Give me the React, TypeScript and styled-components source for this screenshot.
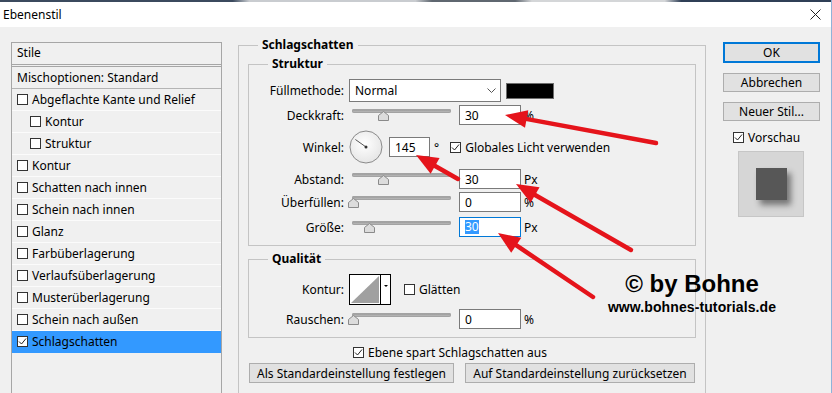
import React from 'react';
import styled, { createGlobalStyle } from 'styled-components';

const Global = createGlobalStyle`
  html, body { margin: 0; padding: 0; background: #f0f0f0; }
  body {
    font-family: "Segoe UI", "Noto Sans", sans-serif;
    font-size: 12px;
    color: #000;
  }
`;

const Window = styled.div`
  position: relative;
  width: 832px;
  height: 393px;
  overflow: hidden;
  box-sizing: border-box;
  background: #f0f0f0;
  border-right: 1px solid #8fb3d9;
  display: flex;
  flex-direction: column;
`;

const DesktopStrip = styled.div`
  flex: none;
  height: 2px;
  background: linear-gradient(90deg, #3b4a5e 0 28%, #c9ccd0 30% 50%, #5f6770 52% 62%, #d4d6d8 64% 80%, #2f3f56 82%);
`;

const TitleBar = styled.div`
  flex: none;
  height: 25px;
  background: #fff;
  display: flex;
  align-items: center;
  justify-content: space-between;
  padding: 0 10px 0 3px;
`;

const Body = styled.div`
  flex: 1;
  display: flex;
  align-items: flex-start;
  padding: 10px 0 0 11px;
`;

/* ---- left style list ---- */

const StyleList = styled.div`
  flex: none;
  width: 211px;
  height: 400px;
  margin-top: 5px;
  box-sizing: border-box;
  border: 1px solid #a6a6a6;
`;

const ListHead = styled.div`
  height: 22px;
  display: flex;
  align-items: center;
  padding: 0 0 3px 5px;
  box-sizing: border-box;
  border-bottom: 1px solid #a6a6a6;
`;

const BlendRow = styled.div`
  height: 21px;
  display: flex;
  align-items: center;
  padding-left: 5px;
  margin-top: 1px;
  border-top: 1px solid #a6a6a6;
  border-bottom: 1px solid #b4b4b4;
`;

const Item = styled.div<{ $nested?: boolean; $selected?: boolean }>`
  height: 21px;
  display: flex;
  align-items: center;
  gap: 4px;
  padding-left: ${p => (p.$nested ? 18 : 5)}px;
  border-bottom: 1px solid ${p => (p.$selected ? '#3399ff' : '#fbfbfb')};
  background: ${p => (p.$selected ? '#3399ff' : 'transparent')};
`;

const Box = styled.span`
  flex: none;
  width: 11px;
  height: 11px;
  box-sizing: border-box;
  border: 1px solid #333;
  background: #fff;
  display: flex;
  align-items: center;
  justify-content: center;
`;

const CheckLine = styled.div<{ $ml?: number; $mt?: number }>`
  display: flex;
  align-items: center;
  gap: 4px;
  height: 16px;
  margin-left: ${p => p.$ml ?? 0}px;
  margin-top: ${p => p.$mt ?? 0}px;
`;

const Check = ({ on }: { on?: boolean }) => (
  <Box>
    {on && (
      <svg width="9" height="9" viewBox="0 0 9 9">
        <polyline points="1,4.5 3.5,7 8,1.5" fill="none" stroke="#222" strokeWidth="1" />
      </svg>
    )}
  </Box>
);

/* ---- main group boxes ---- */

const Main = styled.div`
  flex: none;
  width: 468px;
  margin-left: 16px;
`;

const Group = styled.fieldset<{ $outer?: boolean; $mt?: number }>`
  margin: ${p => p.$mt ?? 0}px 0 0;
  min-width: 0;
  box-sizing: border-box;
  border: 1px solid #c4c4c4;
  padding: ${p => (p.$outer ? '3px 9px 40px' : '7px 0 8px')};
`;

const Legend = styled.legend<{ $ml: number }>`
  margin-left: ${p => p.$ml}px;
  padding: 0 4px;
  font-weight: bold;
  line-height: 16px;
`;

const Row = styled.div<{ $mt?: number }>`
  display: flex;
  align-items: center;
  margin-top: ${p => p.$mt ?? 0}px;
`;

const Label = styled.div`
  flex: none;
  width: 95px;
  margin-right: 5px;
  text-align: right;
`;

const Select = styled.div`
  width: 152px;
  height: 23px;
  box-sizing: border-box;
  border: 1px solid #7a7a7a;
  background: #fff;
  display: flex;
  align-items: center;
  justify-content: space-between;
  padding: 0 4px 0 5px;
`;

const Swatch = styled.div`
  width: 48px;
  height: 16px;
  margin-left: 5px;
  box-sizing: border-box;
  border: 1px solid #6d6d6d;
  background: #000;
`;

const SliderBox = styled.div`
  position: relative;
  flex: none;
  width: 102px;
  height: 20px;
  margin-right: 8px;
`;

const Track = styled.div`
  position: absolute;
  left: 3px;
  right: 0;
  top: 4px;
  height: 4px;
  border-radius: 2px;
  background: linear-gradient(#8e8e8e, #c8c8c8);
  box-shadow: inset 0 0 0 1px #a3a3a3;
`;

const Thumb = styled.svg`
  position: absolute;
  top: 6px;
`;

const Slider = ({ pos }: { pos: number }) => (
  <SliderBox>
    <Track />
    <Thumb width="11" height="10" viewBox="0 0 11 10" style={{ left: pos - 5 }}>
      <polygon points="0.5,9.5 0.5,4.5 5.5,0.5 10.5,4.5 10.5,9.5" fill="#dcdcdc" stroke="#8a8a8a" />
    </Thumb>
  </SliderBox>
);

const NumBox = styled.div<{ $w?: number; $focus?: boolean }>`
  flex: none;
  width: ${p => p.$w ?? 62}px;
  height: 20px;
  box-sizing: border-box;
  border: 1px solid ${p => (p.$focus ? '#0078d7' : '#7a7a7a')};
  background: #fff;
  display: flex;
  align-items: center;
  padding-left: 5px;
`;

const Selected = styled.span`
  background: #3399ff;
  color: #fff;
  line-height: 14px;
`;

const Unit = styled.span<{ $ml?: number }>`
  margin-left: ${p => p.$ml ?? 3}px;
`;

const Contour = styled.svg`
  flex: none;
  margin-right: 13px;
`;

const ButtonRow = styled.div`
  display: flex;
  gap: 11px;
  margin: 3px 1px 0;
`;

const Button = styled.div<{ $w?: number; $h?: number; $primary?: boolean; $mt?: number }>`
  box-sizing: border-box;
  width: ${p => (p.$w ? `${p.$w}px` : 'auto')};
  flex: ${p => (p.$w ? 'none' : '1')};
  height: ${p => p.$h ?? 20}px;
  margin-top: ${p => p.$mt ?? 0}px;
  border: ${p => (p.$primary ? '2px solid #0078d7' : '1px solid #adadad')};
  background: #e1e1e1;
  display: flex;
  align-items: center;
  justify-content: center;
`;

/* ---- right column ---- */

const Side = styled.div`
  flex: none;
  width: 97px;
  margin: 5px 0 0 17px;
  display: flex;
  flex-direction: column;
`;

const Preview = styled.div`
  width: 66px;
  height: 66px;
  margin: 6px 0 0 15px;
  box-sizing: border-box;
  border: 1px solid #c6c6c6;
  background: #d6d6d6;
  display: flex;
  align-items: center;
  justify-content: center;
`;

const PreviewSquare = styled.div`
  width: 31px;
  height: 32px;
  background: #575757;
  box-shadow: 4px 5px 6px rgba(0, 0, 0, 0.45);
`;

/* ---- overlays ---- */

const Arrows = styled.svg`
  position: absolute;
  left: 0;
  top: 0;
  pointer-events: none;
`;

const Watermark = styled.div`
  position: absolute;
  left: 592px;
  top: 270px;
  width: 200px;
  display: flex;
  flex-direction: column;
  align-items: center;
  font-family: "Liberation Sans", Arial, sans-serif;
  font-weight: bold;
  color: #000;
`;

const Big = styled.div`
  font-size: 24px;
  line-height: 28px;
`;

const Small = styled.div`
  font-size: 14px;
  line-height: 18px;
  letter-spacing: 0.1px;
`;

const Arrow = ({ x1, y1, x2, y2 }: { x1: number; y1: number; x2: number; y2: number }) => {
  const len = Math.hypot(x2 - x1, y2 - y1);
  const ux = (x2 - x1) / len;
  const uy = (y2 - y1) / len;
  const L = 22;
  const W = 9;
  const bx = x2 - ux * L;
  const by = y2 - uy * L;
  const pts = `${x2},${y2} ${bx - uy * W},${by + ux * W} ${bx + uy * W},${by - ux * W}`;
  return (
    <g>
      <line x1={x1} y1={y1} x2={bx + ux * 2} y2={by + uy * 2} stroke="#e5141b" strokeWidth="4.5" strokeLinecap="round" />
      <polygon points={pts} fill="#e5141b" />
    </g>
  );
};

const styles = [
  { name: 'Abgeflachte Kante und Relief' },
  { name: 'Kontur', nested: true },
  { name: 'Struktur', nested: true },
  { name: 'Kontur' },
  { name: 'Schatten nach innen' },
  { name: 'Schein nach innen' },
  { name: 'Glanz' },
  { name: 'Farbüberlagerung' },
  { name: 'Verlaufsüberlagerung' },
  { name: 'Musterüberlagerung' },
  { name: 'Schein nach außen' },
  { name: 'Schlagschatten', on: true },
];

export default function App() {
  return (
    <Window>
      <Global />
      <DesktopStrip />
      <TitleBar>
        <span>Ebenenstil</span>
        <svg width="11" height="11" viewBox="0 0 11 11">
          <path d="M0.5 0.5 L10.5 10.5 M10.5 0.5 L0.5 10.5" stroke="#222" strokeWidth="1" />
        </svg>
      </TitleBar>
      <Body>
        <StyleList>
          <ListHead>Stile</ListHead>
          <BlendRow>Mischoptionen: Standard</BlendRow>
          {styles.map(s => (
            <Item key={s.name + (s.nested ? 'n' : '')} $nested={s.nested} $selected={s.on}>
              <Check on={s.on} />
              <span>{s.name}</span>
            </Item>
          ))}
        </StyleList>

        <Main>
          <Group $outer>
            <Legend $ml={10}>Schlagschatten</Legend>
            <Group>
              <Legend $ml={19}>Struktur</Legend>
              <Row>
                <Label>Füllmethode:</Label>
                <Select>
                  <span>Normal</span>
                  <svg width="9" height="6" viewBox="0 0 9 6">
                    <polyline points="0.5,0.5 4.5,4.5 8.5,0.5" fill="none" stroke="#555" />
                  </svg>
                </Select>
                <Swatch />
              </Row>
              <Row $mt={3}>
                <Label>Deckkraft:</Label>
                <Slider pos={34} />
                <NumBox>30</NumBox>
                <Unit>%</Unit>
              </Row>
              <Row $mt={5}>
                <Label>Winkel:</Label>
                <svg width="34" height="34" viewBox="0 0 34 34">
                  <defs>
                    <radialGradient id="dial" cx="45%" cy="40%" r="60%">
                      <stop offset="0" stopColor="#ffffff" />
                      <stop offset="1" stopColor="#e6e6e6" />
                    </radialGradient>
                  </defs>
                  <circle cx="17" cy="17" r="16" fill="url(#dial)" stroke="#8a8a8a" />
                  <line x1="17" y1="17" x2="6.4" y2="9.5" stroke="#555" strokeWidth="1" />
                  <circle cx="17" cy="17" r="1.5" fill="#333" />
                </svg>
                <NumBox $w={41} style={{ marginLeft: 6 }}>145</NumBox>
                <Unit $ml={4}>°</Unit>
                <CheckLine $ml={11}>
                  <Check on />
                  <span>Globales Licht verwenden</span>
                </CheckLine>
              </Row>
              <Row $mt={5}>
                <Label>Abstand:</Label>
                <Slider pos={34} />
                <NumBox>30</NumBox>
                <Unit>Px</Unit>
              </Row>
              <Row $mt={3}>
                <Label>Überfüllen:</Label>
                <Slider pos={4} />
                <NumBox>0</NumBox>
                <Unit>%</Unit>
              </Row>
              <Row $mt={5}>
                <Label>Größe:</Label>
                <Slider pos={20} />
                <NumBox $focus>
                  <Selected>30</Selected>
                </NumBox>
                <Unit>Px</Unit>
              </Row>
            </Group>

            <Group $mt={5}>
              <Legend $ml={19}>Qualität</Legend>
              <Row>
                <Label>Kontur:</Label>
                <Contour width="42" height="31" viewBox="0 0 42 31">
                  <rect x="0.5" y="0.5" width="41" height="30" fill="#fff" stroke="#000" />
                  <polygon points="2,29 30,2 30,29" fill="#a0a0a0" />
                  <line x1="31.5" y1="1" x2="31.5" y2="30" stroke="#000" />
                  <polygon points="35,11 39,11 37,13" fill="#000" />
                </Contour>
                <CheckLine>
                  <Check />
                  <span>Glätten</span>
                </CheckLine>
              </Row>
              <Row $mt={4}>
                <Label>Rauschen:</Label>
                <Slider pos={4} />
                <NumBox>0</NumBox>
                <Unit>%</Unit>
              </Row>
            </Group>

            <CheckLine $ml={105} $mt={6}>
              <Check on />
              <span>Ebene spart Schlagschatten aus</span>
            </CheckLine>
            <ButtonRow>
              <Button $w={205}>Als Standardeinstellung festlegen</Button>
              <Button>Auf Standardeinstellung zurücksetzen</Button>
            </ButtonRow>
          </Group>
        </Main>

        <Side>
          <Button $primary $h={18}>OK</Button>
          <Button $h={18} $mt={10}>Abbrechen</Button>
          <Button $h={18} $mt={10}>Neuer Stil...</Button>
          <CheckLine $ml={10} $mt={8}>
            <Check on />
            <span>Vorschau</span>
          </CheckLine>
          <Preview>
            <PreviewSquare />
          </Preview>
        </Side>
      </Body>

      <Arrows width="832" height="393" viewBox="0 0 832 393">
        <Arrow x1={656} y1={143} x2={505} y2={115} />
        <Arrow x1={458} y1={179} x2={416} y2={155} />
        <Arrow x1={631} y1={250} x2={516} y2={184} />
        <Arrow x1={593} y1={297} x2={498} y2={233} />
      </Arrows>

      <Watermark>
        <Big>© by Bohne</Big>
        <Small>www.bohnes-tutorials.de</Small>
      </Watermark>
    </Window>
  );
}
